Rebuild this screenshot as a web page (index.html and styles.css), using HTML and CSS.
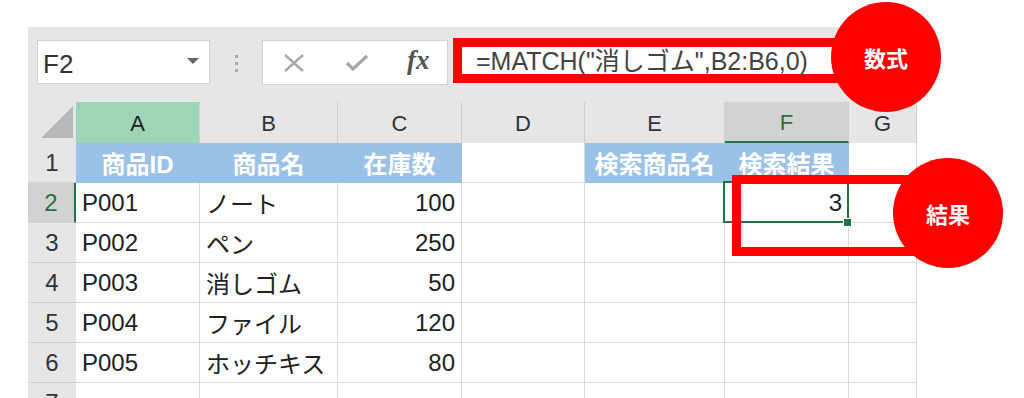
FILE: index.html
```html
<!DOCTYPE html>
<html lang="ja">
<head>
    <meta charset="UTF-8">
    <title>MATCH関数</title>
    <link rel="stylesheet" href="styles.css">
</head>
<body>
    <div class="sheet">
        <div class="formula-bar">
            <div class="name-box">
                <span>F2</span>
                <i class="caret"></i>
            </div>
            <div class="grip"><i></i><i></i><i></i></div>
            <div class="fx-buttons">
                <svg class="icon-cancel" width="22" height="18" viewBox="0 0 22 18">
                    <path d="M2 1 L20 17 M20 1 L2 17" stroke="#a8a8a8" stroke-width="2.4" fill="none"/>
                </svg>
                <svg class="icon-enter" width="24" height="18" viewBox="0 0 24 18">
                    <path d="M2 9 L8 15 L22 2" stroke="#a8a8a8" stroke-width="3.4" fill="none"/>
                </svg>
                <span class="fx">fx</span>
            </div>
            <div class="formula-input">=MATCH("消しゴム",B2:B6,0)</div>
        </div>

        <div class="grid">
            <div class="corner">
                <svg width="32" height="32" viewBox="0 0 32 32"><polygon points="32,0 32,32 0,32" fill="#b9b9b9"/></svg>
            </div>
            <div class="ch ch-active">A</div>
            <div class="ch">B</div>
            <div class="ch">C</div>
            <div class="ch">D</div>
            <div class="ch">E</div>
            <div class="ch ch-sel">F</div>
            <div class="ch">G</div>

            <div class="rh">1</div>
            <div class="c head">商品ID</div>
            <div class="c head">商品名</div>
            <div class="c head">在庫数</div>
            <div class="c"></div>
            <div class="c head">検索商品名</div>
            <div class="c head">検索結果</div>
            <div class="c"></div>

            <div class="rh rh-sel">2</div>
            <div class="c">P001</div>
            <div class="c">ノート</div>
            <div class="c num">100</div>
            <div class="c"></div>
            <div class="c"></div>
            <div class="c num sel">3</div>
            <div class="c"></div>

            <div class="rh">3</div>
            <div class="c">P002</div>
            <div class="c">ペン</div>
            <div class="c num">250</div>
            <div class="c"></div>
            <div class="c"></div>
            <div class="c"></div>
            <div class="c"></div>

            <div class="rh">4</div>
            <div class="c">P003</div>
            <div class="c">消しゴム</div>
            <div class="c num">50</div>
            <div class="c"></div>
            <div class="c"></div>
            <div class="c"></div>
            <div class="c"></div>

            <div class="rh">5</div>
            <div class="c">P004</div>
            <div class="c">ファイル</div>
            <div class="c num">120</div>
            <div class="c"></div>
            <div class="c"></div>
            <div class="c"></div>
            <div class="c"></div>

            <div class="rh">6</div>
            <div class="c">P005</div>
            <div class="c">ホッチキス</div>
            <div class="c num">80</div>
            <div class="c"></div>
            <div class="c"></div>
            <div class="c"></div>
            <div class="c"></div>

            <div class="rh">7</div>
            <div class="c"></div>
            <div class="c"></div>
            <div class="c"></div>
            <div class="c"></div>
            <div class="c"></div>
            <div class="c"></div>
            <div class="c"></div>
        </div>

        <div class="mark-result"></div>
    </div>

    <div class="badge badge-formula">数式</div>
    <div class="badge badge-result">結果</div>
</body>
</html>
```

FILE: styles.css
```css
* {
    margin: 0;
    padding: 0;
    box-sizing: border-box;
}

body {
    position: relative;
    height: 398px;
    overflow: hidden;
    background: white;
    font-family: 'Liberation Sans', 'Noto Sans CJK JP', sans-serif;
    color: #222;
}

.sheet {
    position: relative;
    width: 889px;
    margin: 27px 0 0 28px;
    background: #e6e6e6;
}

/* formula bar */
.formula-bar {
    display: flex;
    align-items: flex-start;
    height: 75px;
    padding-left: 9px;
}

.name-box {
    display: flex;
    align-items: center;
    justify-content: space-between;
    width: 173px;
    height: 44px;
    margin-top: 13px;
    padding: 4px 10px 0 5px;
    background: white;
    border: 1px solid #d2d2d2;
    font-size: 26px;
    color: #333;
}

.caret {
    width: 0;
    height: 0;
    margin-top: -6px;
    border-left: 6px solid transparent;
    border-right: 6px solid transparent;
    border-top: 6px solid #666;
}

.grip {
    display: flex;
    flex-direction: column;
    align-items: center;
    gap: 4px;
    width: 52px;
    padding-top: 28px;
}

.grip i {
    width: 3px;
    height: 3px;
    background: #aaa;
}

.fx-buttons {
    display: flex;
    align-items: center;
    width: 186px;
    height: 45px;
    margin-top: 13px;
    padding-left: 20px;
    background: white;
    border: 1px solid #d2d2d2;
}

.icon-cancel {
    margin-right: 40px;
}

.icon-enter {
    margin-right: 38px;
}

.fx {
    font-family: 'Liberation Serif', serif;
    font-style: italic;
    font-weight: bold;
    font-size: 27px;
    color: #555;
    margin-top: -4px;
}

.formula-input {
    width: 400px;
    height: 45px;
    margin: 11px 0 0 5px;
    padding: 2px 0 0 14px;
    background: white;
    border: 9px solid #ff0000;
    font-size: 25px;
    line-height: 24px;
    color: #444;
    white-space: nowrap;
}

/* grid */
.grid {
    display: grid;
    grid-template-columns: 48px 124px 138px 124px 123px 140px 124px 68px;
    grid-template-rows: 41px repeat(7, 40px);
}

.corner {
    display: flex;
    align-items: flex-end;
    justify-content: flex-end;
    padding: 0 3px 5px 0;
    background: #e6e6e6;
}

.ch {
    display: flex;
    align-items: center;
    justify-content: center;
    padding-top: 2px;
    background: #e6e6e6;
    border-right: 1px solid #cfcfcf;
    font-size: 22px;
    color: #333;
}

.ch:last-child {
    border-right: none;
}

.ch-active {
    background: #9fd5b7;
    color: #222;
}

.ch-sel {
    background: #d2d2d2;
    color: #217346;
    border-bottom: 2px solid #217346;
}

.rh {
    display: flex;
    align-items: center;
    justify-content: center;
    background: #e6e6e6;
    border-bottom: 1px solid #d2d2d2;
    font-size: 24px;
    color: #333;
}

.rh-sel {
    background: #d2d2d2;
    color: #217346;
    border-right: 2px solid #217346;
}

.c {
    display: flex;
    align-items: center;
    padding: 0 6px;
    background: white;
    border-right: 1px solid #d9d9d9;
    border-bottom: 1px solid #d9d9d9;
    font-size: 24px;
    white-space: nowrap;
}

.c.head {
    justify-content: center;
    background: #9bc2e6;
    border-color: #9bc2e6;
    color: white;
    font-weight: bold;
}

.c.num {
    justify-content: flex-end;
}

.c.sel {
    position: relative;
}

.c.sel::after {
    content: "";
    position: absolute;
    top: -2px;
    left: -2px;
    right: -1px;
    bottom: -1px;
    border: 2px solid #217346;
}

.c.sel::before {
    content: "";
    position: absolute;
    right: -4px;
    bottom: -5px;
    width: 7px;
    height: 7px;
    background: #217346;
    border: 1px solid white;
    z-index: 1;
}

/* annotations */
.mark-result {
    position: absolute;
    left: 704px;
    top: 148px;
    width: 230px;
    height: 81px;
    border: 9px solid #ff0000;
}

.badge {
    position: absolute;
    display: flex;
    align-items: center;
    justify-content: center;
    width: 110px;
    height: 110px;
    border-radius: 50%;
    background: #ff0000;
    color: white;
    font-family: 'Noto Sans CJK JP', sans-serif;
    font-size: 22px;
    font-weight: bold;
}

.badge-formula {
    left: 831px;
    top: 2px;
}

.badge-result {
    left: 893px;
    top: 158px;
}
```
